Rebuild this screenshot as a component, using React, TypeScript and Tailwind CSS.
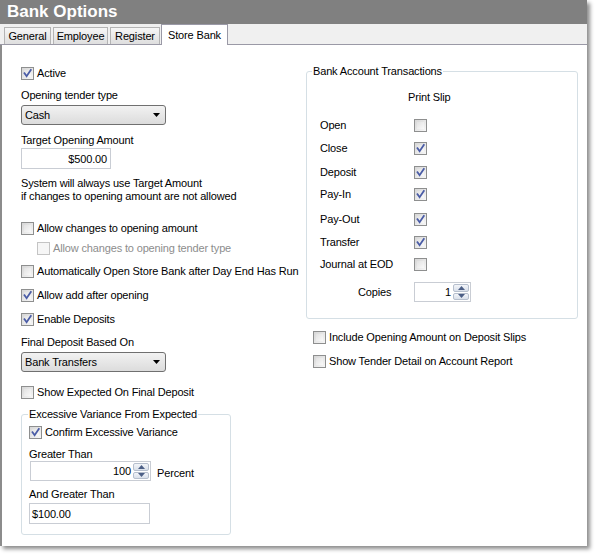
import React from 'react'

// ============================================
// SMALL WIN-STYLE CONTROLS
// ============================================

function CheckBox({ checked = false, disabled = false }: { checked?: boolean; disabled?: boolean }) {
  return (
    <span
      className={
        'relative flex-none w-[13px] h-[13px] border ' +
        (disabled
          ? 'border-[#c4c4c4] bg-[#f6f6f6]'
          : 'border-[#8e8f8f] bg-gradient-to-br from-[#d6d6d6] to-[#f7f7f7]')
      }
    >
      {!disabled && <span className="absolute inset-[2px] bg-gradient-to-br from-[#e2e2e2] to-[#f9f9f9]" />}
      {checked && (
        <svg viewBox="0 0 11 11" className="absolute inset-0 w-[11px] h-[11px]">
          <path d="M2.5 5.2 L4.6 8.2 L8.8 2" fill="none" stroke="#4a5ca6" strokeWidth="1.8" strokeLinecap="square" />
        </svg>
      )}
    </span>
  )
}

function CheckRow({
  label,
  checked,
  disabled,
  className = '',
}: {
  label: string
  checked?: boolean
  disabled?: boolean
  className?: string
}) {
  return (
    <div className={'flex items-center h-[16px] gap-[3px] ' + className}>
      <CheckBox checked={checked} disabled={disabled} />
      <span className={disabled ? 'text-[#8d8d8d]' : ''}>{label}</span>
    </div>
  )
}

function Select({ value, className = '' }: { value: string; className?: string }) {
  return (
    <div
      className={
        'flex items-center justify-between h-[20px] w-[145px] border border-[#707070] rounded-[3px] bg-gradient-to-b from-[#f2f2f2] to-[#dcdcdc] pl-[3px] pr-[5px] ' +
        className
      }
    >
      <span>{value}</span>
      <svg viewBox="0 0 7 4" className="w-[7px] h-[4px]">
        <path d="M0 0 H7 L3.5 4 Z" fill="#000" />
      </svg>
    </div>
  )
}

function Spinner({ value, className = '' }: { value: string; className?: string }) {
  return (
    <div className={'flex items-stretch h-[20px] border border-[#c9cdd4] bg-white ' + className}>
      <span className="flex-1 flex items-center justify-end pr-[2px]">{value}</span>
      <div className="flex flex-col w-[16px] my-[1px] mr-[1px] gap-[1px]">
        <div className="flex-1 flex items-center justify-center border border-[#b6bfcd] rounded-[2px] bg-gradient-to-b from-[#f3f5f9] to-[#d9e0ea]">
          <svg viewBox="0 0 7 4" className="w-[7px] h-[4px]">
            <path d="M0 4 H7 L3.5 0 Z" fill="#4c5f86" />
          </svg>
        </div>
        <div className="flex-1 flex items-center justify-center border border-[#b6bfcd] rounded-[2px] bg-gradient-to-b from-[#f3f5f9] to-[#d9e0ea]">
          <svg viewBox="0 0 7 4" className="w-[7px] h-[4px]">
            <path d="M0 0 H7 L3.5 4 Z" fill="#4c5f86" />
          </svg>
        </div>
      </div>
    </div>
  )
}

function Tab({ label, width, active = false }: { label: string; width: string; active?: boolean }) {
  if (active) {
    return (
      <div className={'flex items-center justify-center h-[21px] bg-white border-x border-t border-[#9a99a6] -mb-px z-10 ' + width}>
        {label}
      </div>
    )
  }
  return (
    <div className={'flex items-center justify-center h-[17px] border border-b-0 border-[#b4b4b4] bg-gradient-to-b from-[#f6f6f6] to-[#dedede] ' + width}>
      {label}
    </div>
  )
}

// ============================================
// APP
// ============================================

const transactions = [
  { label: 'Open', checked: false, mt: 'mt-[13px]' },
  { label: 'Close', checked: true, mt: 'mt-[7px]' },
  { label: 'Deposit', checked: true, mt: 'mt-[8px]' },
  { label: 'Pay-In', checked: true, mt: 'mt-[6px]' },
  { label: 'Pay-Out', checked: true, mt: 'mt-[9px]' },
  { label: 'Transfer', checked: true, mt: 'mt-[7px]' },
  { label: 'Journal at EOD', checked: false, mt: 'mt-[6px]' },
]

export default function App() {
  return (
    <div
      className="w-[595px] h-[554px] bg-white text-[11px] text-black leading-[14px] tracking-[-0.15px]"
      style={{ fontFamily: '"Liberation Sans", Arial, sans-serif' }}
    >
      <div className="w-[587px] h-[546px] flex flex-col bg-white shadow-[3px_3px_4px_rgba(0,0,0,0.45)]">
        {/* Title */}
        <div className="flex-none h-[24px] bg-[#808080] flex items-center pl-[7px]">
          <span className="text-white font-bold text-[17px] tracking-normal">Bank Options</span>
        </div>

        {/* Tabs */}
        <div className="flex-none h-[21px] bg-[#f0f0f0] border-b border-[#9a99a6] flex items-end pl-[4px] gap-[2px]">
          <Tab label="General" width="w-[47px]" />
          <Tab label="Employee" width="w-[55px]" />
          <Tab label="Register" width="w-[50px]" />
          <div className="-ml-[1px] flex items-end">
            <Tab label="Store Bank" width="w-[67px]" active />
          </div>
        </div>

        {/* Body */}
        <div className="flex-1 flex border-l-2 border-[#8c8c8c]">
          {/* Left column */}
          <div className="w-[284px] pl-[19px] flex flex-col">
            <CheckRow label="Active" checked className="mt-[20px]" />
            <div className="mt-[7px]">Opening tender type</div>
            <Select value="Cash" className="mt-[3px]" />
            <div className="mt-[8px]">Target Opening Amount</div>
            <div className="mt-[1px] w-[90px] h-[21px] border border-[#c9cdd4] flex items-center justify-end pr-[3px]">
              $500.00
            </div>
            <div className="mt-[8px] leading-[13px]">
              System will always use Target Amount
              <br />
              if changes to opening amount are not allowed
            </div>
            <CheckRow label="Allow changes to opening amount" className="mt-[17px]" />
            <CheckRow label="Allow changes to opening tender type" disabled className="mt-[4px] ml-[16px]" />
            <CheckRow label="Automatically Open Store Bank after Day End Has Run" className="mt-[7px] whitespace-nowrap" />
            <CheckRow label="Allow add after opening" checked className="mt-[8px]" />
            <CheckRow label="Enable Deposits" checked className="mt-[8px]" />
            <div className="mt-[8px]">Final Deposit Based On</div>
            <Select value="Bank Transfers" className="mt-[3px]" />
            <CheckRow label="Show Expected On Final Deposit" className="mt-[12px]" />

            <fieldset className="mt-[7px] w-[210px] border border-[#d5dfe5] rounded-[3px] pl-[7px] pb-[10px]">
              <legend className="-ml-[1px] px-[1px]">Excessive Variance From Expected</legend>
              <CheckRow label="Confirm Excessive Variance" checked className="mt-[3px]" />
              <div className="mt-[7px]">Greater Than</div>
              <div className="flex items-center gap-[6px] ml-[1px]">
                <Spinner value="100" className="w-[121px]" />
                <span className="mt-[4px]">Percent</span>
              </div>
              <div className="mt-[6px]">And Greater Than</div>
              <div className="mt-[2px] w-[121px] h-[21px] border border-[#c9cdd4] flex items-center pl-[2px]">
                $100.00
              </div>
            </fieldset>
          </div>

          {/* Right column */}
          <div className="flex-1 pl-[20px] flex flex-col">
            <fieldset className="mt-[19px] w-[272px] border border-[#d5dfe5] rounded-[3px] pl-[13px] pb-[16px]">
              <legend className="-ml-[8px] px-[1px]">Bank Account Transactions</legend>
              <div className="mt-[12px] ml-[88px]">Print Slip</div>
              {transactions.map((t) => (
                <div key={t.label} className={'flex items-center h-[16px] ' + t.mt}>
                  <span className="w-[94px]">{t.label}</span>
                  <CheckBox checked={t.checked} />
                </div>
              ))}
              <div className="flex items-center mt-[10px]">
                <span className="w-[94px] pl-[38px]">Copies</span>
                <Spinner value="1" className="w-[57px]" />
              </div>
            </fieldset>
            <CheckRow label="Include Opening Amount on Deposit Slips" className="mt-[10px] ml-[7px]" />
            <CheckRow label="Show Tender Detail on Account Report" className="mt-[8px] ml-[7px]" />
          </div>
        </div>
      </div>
    </div>
  )
}
